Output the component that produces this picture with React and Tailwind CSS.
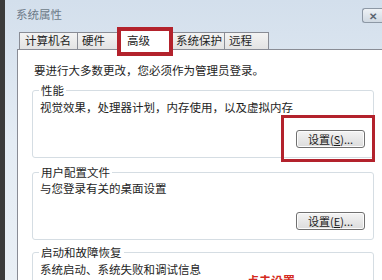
import React from 'react';

const font = { fontFamily: '"Noto Sans CJK SC", "Noto Sans", sans-serif' };

const tabs = [
    { label: '计算机名', w: 'w-[59px]', pl: 'pl-[5px]' },
    { label: '硬件', w: 'w-[41px]', pl: 'pl-[4px]' },
    { label: '高级', w: 'w-[56px]', pl: 'pl-[9px]', active: true },
    { label: '系统保护', w: 'w-[53px]', pl: 'pl-[3px]' },
    { label: '远程', w: 'w-[45px]', pl: 'pl-[4px]' },
];

const SettingsButton = ({ hotkey, highlight }) => (
    <button className="relative h-[18px] w-[69px] rounded-[3px] border border-[#707070] bg-gradient-to-b from-[#f4f4f4] to-[#dcdcdc] text-[11px] leading-none text-[#1a1a1a] shadow-[inset_0_0_0_1px_#fcfcfc]">
        设置(<span className="underline">{hotkey}</span>)...
        {highlight && (
            <div className="pointer-events-none absolute -top-[16px] -bottom-[15px] -left-[16px] -right-[11px] border-[3px] border-[#b3222c]"></div>
        )}
    </button>
);

const Group = ({ title, className = '', children }) => (
    <div className={`relative shrink-0 rounded-[3px] border border-[#d5dde3] pl-[7px] pr-[8px] ${className}`}>
        <span className="absolute -top-[8px] left-[6px] bg-white px-[2px] text-[11.5px] leading-[14px] text-[#1e1e1e]">{title}</span>
        {children}
    </div>
);

const Text = ({ children, className = '' }) => (
    <div className={`text-[11.5px] leading-[14px] text-[#1e1e1e] ${className}`}>{children}</div>
);

export default function App() {
    return (
        <div className="flex h-[280px] w-[382px] overflow-hidden bg-white" style={font}>
            {/* desktop edge */}
            <div className="w-[5px] shrink-0 bg-[#3b3b3b]"></div>

            {/* window frame */}
            <div className="flex min-w-0 flex-1 flex-col bg-gradient-to-b from-[#d3dfec] via-[#e4ecf4] to-[#e9eff5]">
                <div className="flex h-[26px] shrink-0 items-start justify-between">
                    <span className="mt-[6px] pl-[11px] text-[11.5px] text-[#6c7a88]">系统属性</span>
                    <div className="mt-[8px] flex h-[15px] w-[20px] items-center justify-center rounded-l-[3px] border border-r-0 border-[#8d98a5] bg-gradient-to-b from-[#eef2f6] to-[#d0d9e2] text-[10px] font-bold leading-none text-[#5b6570]">
                        ✕
                    </div>
                </div>

                <div className="ml-[12px] flex min-h-0 flex-1 flex-col">
                    {/* tabs */}
                    <div className="relative z-10 flex h-[23px] shrink-0 items-end pl-[2px]">
                        {tabs.map((t, i) => (
                            t.active ? (
                                <div key={t.label} className={`relative -mb-px -ml-px flex h-[22px] ${t.w} ${t.pl} items-start border border-b-0 border-[#898c95] bg-white pt-[3px] text-[11.5px] text-[#1e1e1e]`}>
                                    {t.label}
                                    <div className="pointer-events-none absolute -top-[2px] -bottom-[6px] -left-[1px] -right-[1px] border-[4px] border-[#b3222c]"></div>
                                </div>
                            ) : (
                                <div key={t.label} className={`flex h-[17px] ${t.w} ${t.pl} ${i > 0 ? '-ml-px' : ''} items-center border border-b-0 border-[#898c95] bg-gradient-to-b from-[#f3f3f3] to-[#e3e3e3] text-[11.5px] text-[#1e1e1e]`}>
                                    {t.label}
                                </div>
                            )
                        ))}
                    </div>

                    {/* page */}
                    <div className="flex min-h-0 flex-1 flex-col border-l border-t border-[#898c95] bg-white pl-[14px] pr-[8px]">
                        <Text className="mt-[13px] pl-[2px]">要进行大多数更改，您必须作为管理员登录。</Text>

                        <Group title="性能" className="mt-[13px] h-[68px] pt-[9px]">
                            <Text>视觉效果，处理器计划，内存使用，以及虚拟内存</Text>
                            <div className="mt-[16px] flex justify-end">
                                <SettingsButton hotkey="S" highlight />
                            </div>
                        </Group>

                        <Group title="用户配置文件" className="mt-[14px] h-[68px] pt-[8px]">
                            <Text>与您登录有关的桌面设置</Text>
                            <div className="mt-[17px] flex justify-end">
                                <SettingsButton hotkey="E" />
                            </div>
                        </Group>

                        <Group title="启动和故障恢复" className="mt-[12px] h-[40px] pt-[9px]">
                            <Text>系统启动、系统失败和调试信息</Text>
                            <div className="-mt-[2px] pl-[207px] text-[12px] font-bold leading-[14px] text-[#d42a20]">点击设置</div>
                        </Group>
                    </div>
                </div>
            </div>
        </div>
    );
}
